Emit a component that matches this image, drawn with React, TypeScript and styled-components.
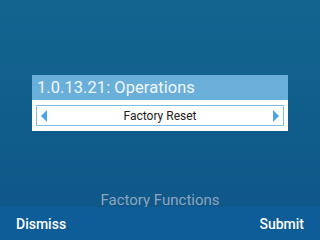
import styled, { createGlobalStyle } from "styled-components";

const GlobalStyle = createGlobalStyle`
  html, body {
    margin: 0;
    padding: 0;
    width: 320px;
    height: 240px;
    overflow: hidden;
    font-family: Roboto, "Liberation Sans", sans-serif;
  }
`;

const Screen = styled.div`
  width: 320px;
  height: 240px;
  display: flex;
  flex-direction: column;
  background: linear-gradient(180deg, #136590 0%, #105d8b 50%, #0f5689 100%);
`;

const Stage = styled.div`
  flex: 1;
  display: flex;
  flex-direction: column;
  align-items: center;
  padding-top: 75px;
`;

const Dialog = styled.div`
  width: 256px;
  background: #ffffff;
`;

const DialogTitle = styled.div`
  height: 25px;
  background: #6aafda;
  color: #f2f7fb;
  font-size: 16.4px;
  line-height: 25px;
  padding-left: 5px;
  letter-spacing: 0.1px;
`;

const DialogBody = styled.div`
  padding: 5px 4px 5px 4px;
`;

const Spinner = styled.div`
  height: 21px;
  box-sizing: border-box;
  border: 1px solid #7fbde3;
  display: flex;
  align-items: center;
  padding: 0 4px;
`;

const SpinValue = styled.span`
  flex: 1;
  text-align: center;
  font-size: 12px;
  color: #222;
`;

const Arrow = styled.span<{ $dir: "left" | "right" }>`
  width: 0;
  height: 0;
  border-top: 6px solid transparent;
  border-bottom: 6px solid transparent;
  ${(p) =>
    p.$dir === "left"
      ? "border-right: 6px solid #4ba4e6;"
      : "border-left: 6px solid #4ba4e6;"}
`;

const Caption = styled.div`
  height: 25px;
  box-sizing: border-box;
  padding-top: 10px;
  text-align: center;
  color: #8ba5bf;
  font-size: 15px;
  line-height: 16px;
`;

const SoftKeys = styled.div`
  height: 33px;
  background: #0e5d98;
  display: flex;
  justify-content: space-between;
  align-items: center;
  padding: 0 16px 0 16px;
`;

const SoftKey = styled.span`
  color: #ffffff;
  font-size: 14px;
  font-weight: 500;
`;

export default function App() {
  return (
    <>
      <GlobalStyle />
      <Screen>
        <Stage>
          <Dialog>
            <DialogTitle>1.0.13.21: Operations</DialogTitle>
            <DialogBody>
              <Spinner>
                <Arrow $dir="left" />
                <SpinValue>Factory Reset</SpinValue>
                <Arrow $dir="right" />
              </Spinner>
            </DialogBody>
          </Dialog>
        </Stage>
        <Caption>Factory Functions</Caption>
        <SoftKeys>
          <SoftKey>Dismiss</SoftKey>
          <SoftKey>Submit</SoftKey>
        </SoftKeys>
      </Screen>
    </>
  );
}
